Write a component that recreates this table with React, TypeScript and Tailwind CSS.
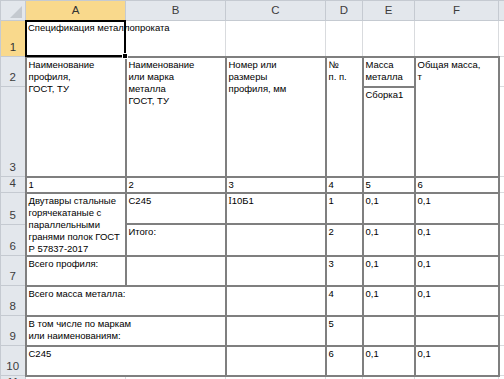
import type { ReactNode } from "react";
import clsx from "clsx";

const gridLine = "border border-[#d9dbde]";
const boxLine = "border-2 border-[#7f7f7f]";

type CellProps = {
  children?: ReactNode;
  box?: boolean;
  colSpan?: number;
  rowSpan?: number;
  className?: string;
};

const Cell = ({ children, box, colSpan, rowSpan, className }: CellProps) => (
  <td
    colSpan={colSpan}
    rowSpan={rowSpan}
    className={clsx(
      "align-top pl-[2px] pt-px text-[9.5px] leading-[12px] text-black whitespace-nowrap overflow-hidden",
      box ? boxLine : gridLine,
      className
    )}
  >
    {children}
  </td>
);

const RowHead = ({ n, active }: { n: number; active?: boolean }) => (
  <th
    className={clsx(
      "align-bottom text-center font-normal text-[11.5px] leading-[13px] pb-[2px] border border-[#c5cad1]",
      active ? "bg-[#f9d98c] text-[#333]" : "bg-[#e3e7ec] text-[#3c3c3c]"
    )}
  >
    {n}
  </th>
);

const ColHead = ({ label, active }: { label: string; active?: boolean }) => (
  <th
    className={clsx(
      "text-center font-normal text-[11.5px] border border-[#c5cad1]",
      active ? "bg-[#f9d98c] text-[#333]" : "bg-[#e3e7ec] text-[#3c3c3c]"
    )}
  >
    {label}
  </th>
);

export default function App() {
  return (
    <div className="w-[504px] h-[379px] overflow-hidden bg-white font-['Liberation_Sans',Arial,sans-serif]">
      <table className="table-fixed border-collapse bg-white w-[504px]">
        <colgroup>
          <col className="w-[25px]" />
          <col className="w-[100px]" />
          <col className="w-[100px]" />
          <col className="w-[100px]" />
          <col className="w-[37px]" />
          <col className="w-[52px]" />
          <col className="w-[84px]" />
          <col className="w-[6px]" />
        </colgroup>
        <thead>
          <tr className="h-[20px]">
            <th className="relative bg-[#e3e7ec] border border-[#c5cad1]">
              <svg viewBox="0 0 24 19" className="absolute inset-0 w-full h-full">
                <polygon points="21,5 21,17 9,17" fill="#c4c9cf" />
              </svg>
            </th>
            <ColHead label="A" active />
            <ColHead label="B" />
            <ColHead label="C" />
            <ColHead label="D" />
            <ColHead label="E" />
            <ColHead label="F" />
            <ColHead label="" />
          </tr>
        </thead>
        <tbody>
          <tr className="h-[36px]">
            <RowHead n={1} active />
            <td className={clsx("relative align-top pl-[2px] pt-px text-[9.5px] leading-[12px] text-black whitespace-nowrap overflow-visible", gridLine)}>
              Спецификация металлопроката
              <div className="absolute -left-[1px] -top-[1px] -right-[1px] -bottom-[1px] border-2 border-black" />
              <div className="absolute -right-[3px] -bottom-[3px] w-[6px] h-[6px] bg-black border border-white" />
            </td>
            <Cell />
            <Cell />
            <Cell />
            <Cell />
            <Cell />
            <Cell />
          </tr>
          <tr className="h-[30px]">
            <RowHead n={2} />
            <Cell box rowSpan={2}>
              Наименование
              <br />
              профиля,
              <br />
              ГОСТ, ТУ
            </Cell>
            <Cell box rowSpan={2}>
              Наименование
              <br />
              или марка
              <br />
              металла
              <br />
              ГОСТ, ТУ
            </Cell>
            <Cell box rowSpan={2}>
              Номер или
              <br />
              размеры
              <br />
              профиля, мм
            </Cell>
            <Cell box rowSpan={2}>
              №
              <br />
              п. п.
            </Cell>
            <Cell box>
              Масса
              <br />
              металла
            </Cell>
            <Cell box rowSpan={2}>
              Общая масса,
              <br />т
            </Cell>
            <Cell />
          </tr>
          <tr className="h-[90px]">
            <RowHead n={3} />
            <Cell box>Сборка1</Cell>
            <Cell />
          </tr>
          <tr className="h-[15px]">
            <RowHead n={4} />
            <Cell box>1</Cell>
            <Cell box>2</Cell>
            <Cell box>3</Cell>
            <Cell box>4</Cell>
            <Cell box>5</Cell>
            <Cell box>6</Cell>
            <Cell />
          </tr>
          <tr className="h-[30px]">
            <RowHead n={5} />
            <Cell box rowSpan={2}>
              Двутавры стальные
              <br />
              горячекатаные с
              <br />
              параллельными
              <br />
              гранями полок ГОСТ
              <br />Р 57837-2017
            </Cell>
            <Cell box>С245</Cell>
            <Cell box>
              <span className="font-['Liberation_Serif',serif]">I</span>10Б1
            </Cell>
            <Cell box>1</Cell>
            <Cell box>0,1</Cell>
            <Cell box>0,1</Cell>
            <Cell />
          </tr>
          <tr className="h-[30px]">
            <RowHead n={6} />
            <Cell box>Итого:</Cell>
            <Cell box />
            <Cell box>2</Cell>
            <Cell box>0,1</Cell>
            <Cell box>0,1</Cell>
            <Cell />
          </tr>
          <tr className="h-[30px]">
            <RowHead n={7} />
            <Cell box>Всего профиля:</Cell>
            <Cell box />
            <Cell box />
            <Cell box>3</Cell>
            <Cell box>0,1</Cell>
            <Cell box>0,1</Cell>
            <Cell />
          </tr>
          <tr className="h-[30px]">
            <RowHead n={8} />
            <Cell box colSpan={2}>
              Всего масса металла:
            </Cell>
            <Cell box />
            <Cell box>4</Cell>
            <Cell box>0,1</Cell>
            <Cell box>0,1</Cell>
            <Cell />
          </tr>
          <tr className="h-[30px]">
            <RowHead n={9} />
            <Cell box colSpan={2}>
              В том числе по маркам
              <br />
              или наименованиям:
            </Cell>
            <Cell box />
            <Cell box>5</Cell>
            <Cell box />
            <Cell box />
            <Cell />
          </tr>
          <tr className="h-[30px]">
            <RowHead n={10} />
            <Cell box colSpan={2}>
              С245
            </Cell>
            <Cell box />
            <Cell box>6</Cell>
            <Cell box>0,1</Cell>
            <Cell box>0,1</Cell>
            <Cell />
          </tr>
          <tr className="h-[15px]">
            <RowHead n={11} />
            <Cell />
            <Cell />
            <Cell />
            <Cell />
            <Cell />
            <Cell />
            <Cell />
          </tr>
        </tbody>
      </table>
    </div>
  );
}
